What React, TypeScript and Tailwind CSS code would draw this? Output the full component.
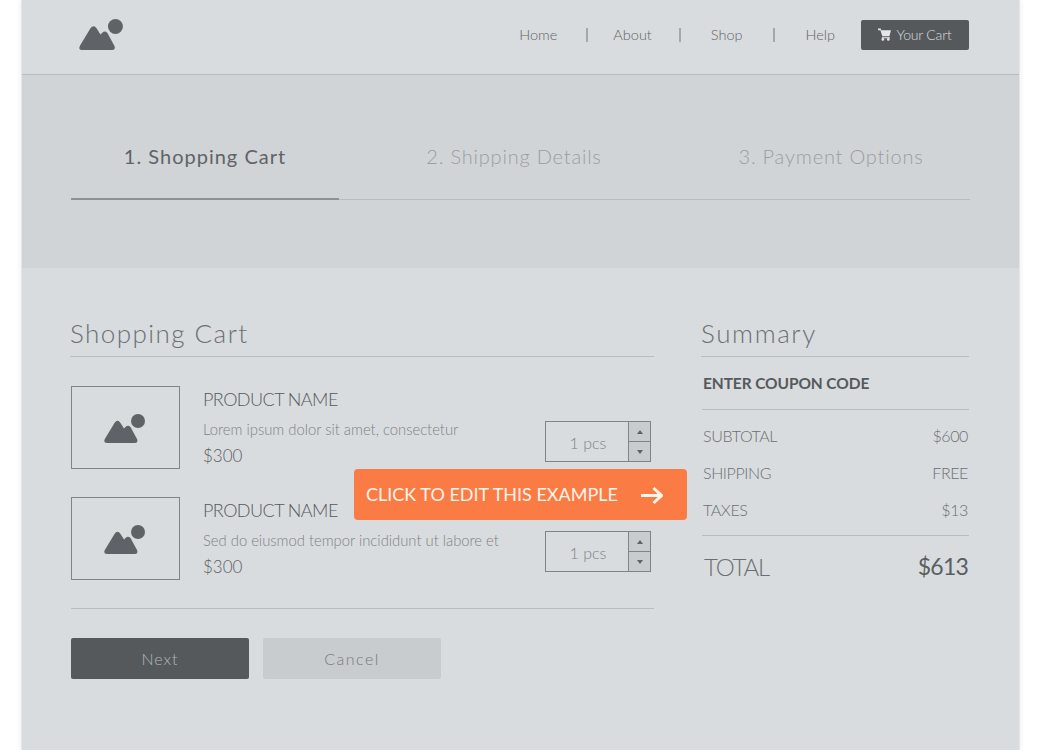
import React from "react";

const Logo = ({ className }: { className?: string }) => (
  <svg viewBox="0 0 41 29" className={className} fill="#5f6367">
    <circle cx="34" cy="7" r="7" />
    <path d="M0.800 25 L10.500 9 Q13.500 4.500 16.500 9 L20 14.500 L21.500 13 Q24 10.500 26.500 13 L33 25 Q34.500 29 31 29 L3 29 Q-1 29 0.800 25 Z" />
  </svg>
);

const Product = ({ desc, boxTop }: { desc: string; boxTop: string }) => (
  <div className="flex h-[83px]">
    <div className="w-[109px] h-[83px] border border-[#808487] flex items-center justify-center shrink-0">
      <Logo className="w-[41px] h-[29px] mr-[2px] mt-[1px]" />
    </div>
    <div className="ml-[23px] flex-1 pt-[1px]">
      <div className="text-[18px] leading-[24px] font-light tracking-[-0.550px] text-[#55595c]">PRODUCT NAME</div>
      <div className="text-[14.800px] leading-[18px] mt-[9px] font-light text-[#7d8184]">{desc}</div>
      <div className="text-[17px] leading-[24px] mt-[6px] font-light text-[#5c6063]">$300</div>
    </div>
    <div className={`${boxTop} mr-[3px] w-[106px] h-[41px] border border-[#808487] flex shrink-0`}>
      <div className="flex-1 flex items-center justify-center pt-[3px] pl-[2px] text-[16px] font-light text-[#7d8184]">1 pcs</div>
      <div className="w-[22px] border-l border-[#808487] flex flex-col bg-[#c9cccf]">
        <div className="flex-1 border-b border-[#808487] flex items-center justify-center">
          <span className="w-0 h-0 border-x-[3px] border-x-transparent border-b-[4px] border-b-[#5f6367]" />
        </div>
        <div className="flex-1 flex items-center justify-center">
          <span className="w-0 h-0 border-x-[3px] border-x-transparent border-t-[4px] border-t-[#5f6367]" />
        </div>
      </div>
    </div>
  </div>
);

const Row = ({ l, r }: { l: string; r: string }) => (
  <div className="flex justify-between h-[37px] items-center pl-[1px] pr-[1px] text-[16px] font-light tracking-[-0.4px] text-[#6b6f72]">
    <span>{l}</span>
    <span>{r}</span>
  </div>
);

export default function App() {
  return (
    <div className="w-[1050px] h-[750px] bg-white overflow-hidden font-['Lato',sans-serif]">
      <div className="relative ml-[21px] w-[999px] h-[750px] bg-[#d9dcdf] border-x border-[#e4e6e8] shadow-[0_0_6px_rgba(0,0,0,0.08)]">
        <header className="h-[75px] border-b border-[#b9bcbf] flex items-center pl-[57px] pr-[50px]">
          <Logo className="w-[44px] h-[31px] mt-[-6px]" />
          <nav className="ml-auto flex items-center text-[14.500px] font-light text-[#5f6367] mt-[-4px]">
            <span className="mr-[1px]">Home</span>
            <span className="w-[2px] h-[14px] bg-[#a4a8ab] ml-[28px] mr-[25px]" />
            <span>About</span>
            <span className="w-[2px] h-[14px] bg-[#a4a8ab] mx-[27px]" />
            <span className="ml-[3px]">Shop</span>
            <span className="w-[2px] h-[14px] bg-[#a4a8ab] ml-[30px] mr-[31px]" />
            <span>Help</span>
          </nav>
          <div className="ml-[26px] w-[108px] h-[30px] mt-[-5px] bg-[#55595c] rounded-[2px] flex items-center justify-center gap-[6px] pr-[1px] text-[14px] font-light text-[#d9dcdf]">
            <svg viewBox="0 0 24 24" className="w-[13px] h-[13px] shrink-0" fill="#e4e6e8">
              <path d="M0 1h5l1 3h18l-3 11H8L4.500 4H0z" />
              <path d="M7 17h15v2H7z" />
              <circle cx="9" cy="21" r="2.500" />
              <circle cx="19" cy="21" r="2.500" />
            </svg>
            <span className="tracking-[-0.2px]">Your Cart</span>
          </div>
        </header>

        <section className="h-[193px] bg-[#d1d4d7] px-[49px] pt-[56px]">
          <div className="grid grid-cols-[268px_350px_280px] text-[20px] h-[69px] border-b border-[#b9bcbf]">
            <div className="relative text-center tracking-[1px] text-[#5f6367] leading-[50px]">
              1. Shopping Cart
              <div className="absolute left-0 right-0 bottom-[-1px] h-[2px] bg-[#8d9194]" />
            </div>
            <div className="text-center font-light tracking-[0.8px] text-[#9a9ea1] leading-[50px]">2. Shipping Details</div>
            <div className="text-center pl-1 font-light tracking-[0.8px] text-[#9a9ea1] leading-[50px]">3. Payment Options</div>
          </div>
        </section>

        <main className="flex px-[49px] pt-[47px]">
          <div className="w-[583px]">
            <h2 className="text-[26px] leading-[36px] h-[42px] font-light tracking-[1.450px] text-[#6b6f72] border-b border-[#b9bcbf] ml-[-1px]">Shopping Cart</h2>
            <div className="mt-[29px] flex flex-col gap-[28px]">
              <Product desc="Lorem ipsum dolor sit amet, consectetur" boxTop="mt-[35px]" />
              <Product desc="Sed do eiusmod tempor incididunt ut labore et" boxTop="mt-[34px]" />
            </div>
            <div className="mt-[28px] h-px bg-[#b9bcbf]" />
            <div className="mt-[29px] flex gap-[14px]">
              <button className="w-[178px] h-[41px] pt-[1px] bg-[#55595c] rounded-[2px] text-[16px] font-light tracking-[1px] text-[#b4b8bb]">Next</button>
              <button className="w-[178px] h-[41px] pt-[1px] bg-[#c9cccf] rounded-[2px] text-[16px] font-light tracking-[1.500px] text-[#74787b]">Cancel</button>
            </div>
          </div>
          <div className="ml-[48px] w-[267px]">
            <h2 className="text-[26px] leading-[36px] h-[42px] font-light tracking-[1.600px] text-[#6b6f72] border-b border-[#b9bcbf] ml-[-1px]">Summary</h2>
            <div className="h-[53px] border-b border-[#b9bcbf] flex items-center pl-[1px] text-[15.500px] font-bold tracking-[-0.1px] text-[#55595c] pt-[1px]">ENTER COUPON CODE</div>
            <div className="pt-[7px] pb-[7px]">
              <Row l="SUBTOTAL" r="$600" />
              <Row l="SHIPPING" r="FREE" />
              <Row l="TAXES" r="$13" />
            </div>
            <div className="border-t border-[#b9bcbf] h-[62px] flex justify-between items-center pl-[2px] pr-[1px] font-light text-[#6b6f72]">
              <span className="text-[24px] tracking-[-1.200px] pt-[1px]">TOTAL</span>
              <span className="text-[23px] tracking-[-0.8px] font-normal text-[#5a5e61]">$613</span>
            </div>
          </div>
        </main>

        <div className="absolute left-[332px] top-[469px] w-[333px] h-[51px] bg-[#fb7b44] rounded-[4px] flex items-center pl-[12px] pr-[24px] justify-between text-[#fff4ea] text-[18px]">
          <span>CLICK TO EDIT THIS EXAMPLE</span>
          <svg viewBox="0 0 22 18" className="w-[22px] h-[18px]" fill="none" stroke="#fff4ea" strokeWidth="3">
            <path d="M0 9.500h20M12.500 2l8 7.500-8 7.500" />
          </svg>
        </div>
      </div>
    </div>
  );
}
